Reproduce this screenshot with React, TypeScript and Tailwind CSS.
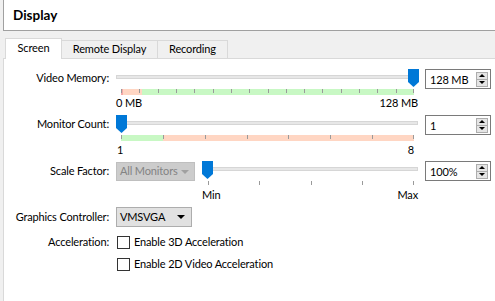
import React from "react";

const FONT = "font-['Lato',_'Liberation_Sans',_sans-serif]";
const TXT = "text-[11px] tracking-[-0.15px] whitespace-nowrap";

function Thumb() {
  return (
    <svg width="11" height="18" viewBox="0 0 11 18">
      <path d="M0 0H11V13L5.5 18L0 13Z" fill="#0078d7" />
    </svg>
  );
}

function Groove({ thumbLeft, width }: { thumbLeft: number; width: number }) {
  return (
    <div className="relative h-[18px]" style={{ width }}>
      <div className="absolute left-0 right-0 top-[6px] h-[4px] border border-[#d6d6d6] bg-[#e7e7e7]" />
      <div className="absolute top-0" style={{ left: thumbLeft }}>
        <Thumb />
      </div>
    </div>
  );
}

function ColorBar({ split, ticks, first, second }: { split: number; ticks: number; first: string; second: string }) {
  const w = 293;
  const marks = Array.from({ length: ticks + 1 }, (_, i) => Math.round((i * w) / ticks));
  return (
    <div className="relative ml-[5px] mt-[2px] flex h-[6px] w-[293px]">
      <div className={first} style={{ width: split }} />
      <div className={"flex-1 " + second} />
      {marks.map((m) => (
        <div key={m} className="absolute top-0 h-[4px] w-px bg-[#9a9a9a]" style={{ left: Math.min(m, w - 1) }} />
      ))}
    </div>
  );
}

function SpinBox({ value }: { value: string }) {
  return (
    <div className="flex h-[20px] w-[66px] items-center border border-[#7a7a7a] bg-white pl-[4px] pr-[2px]">
      <span className={"flex-1 leading-none text-black " + TXT}>{value}</span>
      <div className="flex flex-col">
        <div className="flex h-[8px] w-[12px] items-center justify-center border border-[#adadad] bg-[#e5e5e5]">
          <div className="h-0 w-0 border-x-[3px] border-b-[3px] border-x-transparent border-b-black" />
        </div>
        <div className="-mt-px flex h-[8px] w-[12px] items-center justify-center border border-[#adadad] bg-[#e5e5e5]">
          <div className="h-0 w-0 border-x-[3px] border-t-[3px] border-x-transparent border-t-black" />
        </div>
      </div>
    </div>
  );
}

function Label({ text, h }: { text: string; h: string }) {
  return <div className={"flex w-[105px] shrink-0 items-center justify-end text-black " + TXT + " " + h}>{text}</div>;
}

function CheckRow({ text }: { text: string }) {
  return (
    <div className="flex h-[14px] items-center">
      <div className="h-[13px] w-[13px] border border-[#333333] bg-white" />
      <span className={"ml-[4px] text-black " + TXT}>{text}</span>
    </div>
  );
}

export default function App() {
  return (
    <div className={"h-[301px] w-[495px] overflow-hidden bg-[#f0f0f0] " + FONT}>
      {/* header */}
      <div className="ml-[3px] flex h-[31px] items-center border-b border-l border-[#a0a0a0] bg-white pl-[9px]">
        <span className="text-[13.5px] font-bold text-black">Display</span>
      </div>

      {/* tabs */}
      <div className={"flex h-[27px] items-end pl-[5px] text-black " + TXT}>
        <div className="relative z-10 -mb-px flex h-[21px] w-[57px] items-center justify-center border border-b-0 border-[#d9d9d9] bg-white pb-[2px]">
          Screen
        </div>
        <div className="flex h-[18px] w-[96px] items-center justify-center border border-b-0 border-l-0 border-[#d9d9d9] bg-[#f0f0f0]">
          Remote Display
        </div>
        <div className="flex h-[18px] w-[70px] items-center justify-center border border-b-0 border-l-0 border-[#d9d9d9] bg-[#f0f0f0]">
          Recording
        </div>
      </div>

      {/* panel */}
      <div className="ml-[3px] h-[243px] border-l border-t border-[#d9d9d9] bg-white pt-[10px]">
        {/* video memory */}
        <div className="flex items-start gap-[7px]">
          <Label text="Video Memory:" h="h-[18px]" />
          <div className="w-[302px]">
            <Groove thumbLeft={292} width={302} />
            <ColorBar split={21} ticks={16} first="bg-[#ffd6c3] border-l-2 border-[#f3a7a7]" second="bg-[#c8f8c4]" />
            <div className={"mt-[1px] flex h-[14px] items-center justify-between text-black " + TXT}>
              <span>0 MB</span>
              <span>128 MB</span>
            </div>
          </div>
          <SpinBox value="128 MB" />
        </div>

        {/* monitor count */}
        <div className="mt-[5px] flex items-start gap-[7px]">
          <Label text="Monitor Count:" h="h-[18px]" />
          <div className="w-[302px]">
            <Groove thumbLeft={0} width={302} />
            <ColorBar split={42} ticks={7} first="bg-[#c8f8c4]" second="bg-[#ffd6c3]" />
            <div className={"mt-[2px] flex h-[14px] items-center justify-between pl-[1px] pr-[4px] text-black " + TXT}>
              <span>1</span>
              <span>8</span>
            </div>
          </div>
          <SpinBox value="1" />
        </div>

        {/* scale factor */}
        <div className="mt-[4px] flex items-start gap-[7px]">
          <Label text="Scale Factor:" h="h-[20px]" />
          <div className={"mt-[1px] flex h-[19px] w-[79px] items-center justify-between border border-[#bfbfbf] bg-[#cccccc] pl-[3px] pr-[5px] text-[#838383] " + TXT}>
            <span>All Monitors</span>
            <div className="h-0 w-0 border-x-[4px] border-t-[4px] border-x-transparent border-t-[#a0a0a0]" />
          </div>
          <div className="w-[216px]">
            <Groove thumbLeft={0} width={216} />
            <div className="relative mt-[2px] h-[4px]">
              {[6, 57, 109, 160, 211].map((x) => (
                <div key={x} className="absolute top-0 h-[4px] w-px bg-[#9a9a9a]" style={{ left: x }} />
              ))}
            </div>
            <div className={"mt-[3px] flex h-[14px] items-center justify-between text-black " + TXT}>
              <span>Min</span>
              <span>Max</span>
            </div>
          </div>
          <SpinBox value="100%" />
        </div>

        {/* graphics controller */}
        <div className="mt-[5px] flex items-start gap-[7px]">
          <Label text="Graphics Controller:" h="h-[20px]" />
          <div className={"flex h-[20px] w-[76px] items-center justify-between border border-[#adadad] bg-[#e1e1e1] pl-[3px] pr-[6px] text-black " + TXT}>
            <span>VMSVGA</span>
            <div className="h-0 w-0 border-x-[4px] border-t-[4px] border-x-transparent border-t-black" />
          </div>
        </div>

        {/* acceleration */}
        <div className="mt-[8px] flex items-start gap-[8px]">
          <Label text="Acceleration:" h="h-[14px]" />
          <CheckRow text="Enable 3D Acceleration" />
        </div>
        <div className="mt-[8px] pl-[113px]">
          <CheckRow text="Enable 2D Video Acceleration" />
        </div>
      </div>
    </div>
  );
}
